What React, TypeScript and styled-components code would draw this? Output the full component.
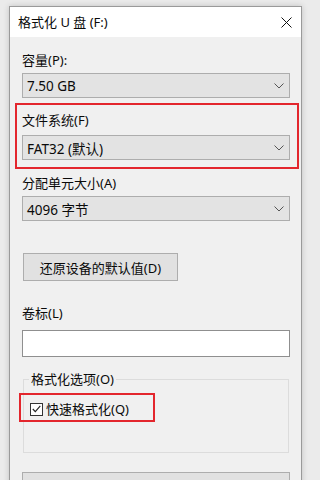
import styled, { createGlobalStyle } from "styled-components";

const GlobalStyle = createGlobalStyle`
  html, body {
    margin: 0;
    height: 480px;
    overflow: hidden;
    background: #ebebeb;
  }
  body {
    font-family: "Noto Sans", "Noto Sans CJK SC", sans-serif;
    font-size: 13px;
    color: #0a0a0a;
  }
`;

const Page = styled.div`
  padding: 6px 8px 0 9px;
`;

const Window = styled.div`
  width: 291px;
  height: 520px;
  border: 1px solid #9a9a9a;
  box-shadow: 0 0 6px rgba(0, 0, 0, 0.18);
  background: #f0f0f0;
  display: flex;
  flex-direction: column;
`;

const TitleBar = styled.div`
  height: 30px;
  background: #fff;
  display: flex;
  align-items: center;
  justify-content: space-between;
  padding: 0 9px 0 8px;
`;

const Title = styled.span`
  font-size: 13px;
  line-height: 18px;
`;

const CloseButton = styled.div`
  width: 12px;
  height: 12px;
  display: flex;
  align-items: center;
  justify-content: center;
  margin-top: 1px;
`;

const Body = styled.div`
  display: flex;
  flex-direction: column;
  padding: 0 11px 0 12px;
`;

const FieldLabel = styled.div<{ $top: number }>`
  margin-top: ${(p) => p.$top}px;
  height: 18px;
  line-height: 18px;
  white-space: nowrap;
`;

const Combo = styled.div<{ $top: number }>`
  margin-top: ${(p) => p.$top}px;
  height: 25px;
  box-sizing: border-box;
  border: 1px solid #adadad;
  background: #e3e3e3;
  display: flex;
  align-items: center;
  justify-content: space-between;
  padding: 0 5px 0 4px;
  font-size: 13.5px;
`;

const Highlight = styled.div`
  margin: 5px -9px 0 -7px;
  border: 2px solid #e3262d;
  padding: 6px 7px 7px 5px;
  display: flex;
  flex-direction: column;
`;

const PushButton = styled.button<{ $top: number; $width?: number }>`
  margin-top: ${(p) => p.$top}px;
  margin-left: 1px;
  width: ${(p) => (p.$width ? `${p.$width}px` : "auto")};
  height: 28px;
  box-sizing: border-box;
  border: 1px solid #adadad;
  background: #e1e1e1;
  font: inherit;
  font-size: 13px;
  color: #0a0a0a;
  padding: 0;
`;

const WideButton = styled(PushButton)`
  margin-left: 0;
  align-self: stretch;
`;

const TextInput = styled.div`
  margin-top: 8px;
  height: 27px;
  box-sizing: border-box;
  border: 1px solid #8f8f8f;
  background: #fff;
`;

const GroupBox = styled.fieldset`
  margin: 13px 1px 0 1px;
  padding: 0 0 30px 5px;
  border: 1px solid #dcdcdc;
  min-width: 0;
`;

const Legend = styled.legend`
  padding: 0 2px;
  line-height: 18px;
  height: 18px;
`;

const CheckHighlight = styled.div`
  margin: 5px 0 0 -10px;
  width: 136px;
  height: 29px;
  box-sizing: border-box;
  border: 2px solid #e3262d;
  display: flex;
  align-items: center;
  gap: 3px;
  padding: 3px 0 0 9px;
`;

const CheckBox = styled.span`
  width: 13px;
  height: 13px;
  box-sizing: border-box;
  border: 1px solid #333;
  background: #fff;
  display: flex;
  align-items: center;
  justify-content: center;
  flex-shrink: 0;
`;

const CheckText = styled.span`
  line-height: 18px;
  white-space: nowrap;
`;

const Chevron = () => (
  <svg width="10" height="6" viewBox="0 0 10 6">
    <path d="M0.5 0.5 L5 5 L9.5 0.5" fill="none" stroke="#555" strokeWidth="1" />
  </svg>
);

const App = () => {
  return (
    <>
      <GlobalStyle />
      <Page>
        <Window>
          <TitleBar>
            <Title>格式化 U 盘 (F:)</Title>
            <CloseButton>
              <svg width="11" height="11" viewBox="0 0 11 11">
                <path d="M0.5 0.5 L10.5 10.5 M10.5 0.5 L0.5 10.5" stroke="#111" strokeWidth="1" />
              </svg>
            </CloseButton>
          </TitleBar>
          <Body>
            <FieldLabel $top={14}>容量(P):</FieldLabel>
            <Combo $top={4}>
              <span>7.50 GB</span>
              <Chevron />
            </Combo>

            <Highlight>
              <FieldLabel $top={0}>文件系统(F)</FieldLabel>
              <Combo $top={6}>
                <span>FAT32 (默认)</span>
                <Chevron />
              </Combo>
            </Highlight>

            <FieldLabel $top={5}>分配单元大小(A)</FieldLabel>
            <Combo $top={4}>
              <span>4096 字节</span>
              <Chevron />
            </Combo>

            <PushButton $top={32} $width={155}>
              还原设备的默认值(D)
            </PushButton>

            <FieldLabel $top={23}>卷标(L)</FieldLabel>
            <TextInput />

            <GroupBox>
              <Legend>格式化选项(O)</Legend>
              <CheckHighlight>
                <CheckBox>
                  <svg width="9" height="8" viewBox="0 0 9 8">
                    <path d="M0.8 4 L3.3 6.6 L8.3 0.8" fill="none" stroke="#222" strokeWidth="1.1" />
                  </svg>
                </CheckBox>
                <CheckText>快速格式化(Q)</CheckText>
              </CheckHighlight>
            </GroupBox>

            {/* start button: only its top edge shows in the frame */}
            <WideButton $top={19} aria-label="开始" />
          </Body>
        </Window>
      </Page>
    </>
  );
};

export default App;
